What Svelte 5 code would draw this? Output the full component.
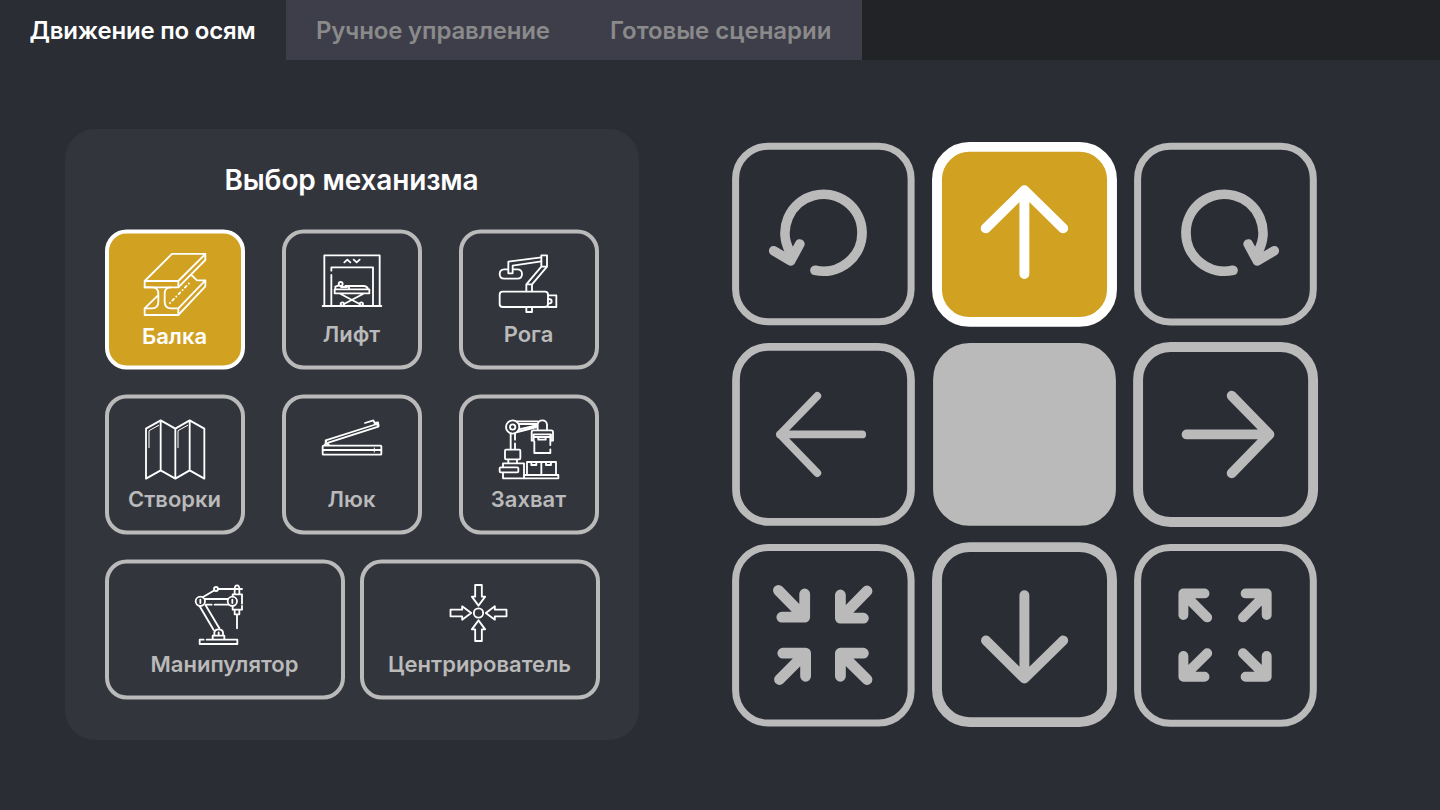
<script>
  const tabs = [
    { name: 'Движение по осям', width: 286, spacing: -0.2 },
    { name: 'Ручное управление', width: 294, spacing: -0.16 },
    { name: 'Готовые сценарии', width: 282, spacing: -0.02 }
  ];
  let tab = $state(0);
  let mechanism = $state('beam');
  let direction = $state('up');

  const mechanisms = [
    { id: 'beam', label: 'Балка' },
    { id: 'lift', label: 'Лифт' },
    { id: 'horns', label: 'Рога' },
    { id: 'doors', label: 'Створки' },
    { id: 'hatch', label: 'Люк' },
    { id: 'gripper', label: 'Захват' },
    { id: 'arm', label: 'Манипулятор', wide: true },
    { id: 'center', label: 'Центрирователь', wide: true }
  ];

  // Each key carries its frame (x, y, size, line width) and the strokes of its glyph.
  const keys = [
    { id: 'ccw', box: '723 134 201 200', f: [735.6, 146.2, 175.5, 7], w: 9.7,
      d: 'M815 270.3A38.5 38.5 0 1 0 789.9 251.5L790.7 260.8M773.8 250.8L790.7 260.8L799.8 244' },
    { id: 'up', box: '924 134 201 200', f: [937, 146.9, 175, 9.9], w: 9.9,
      d: 'M1024.4 274V190.3M985.7 228.4L1024.4 190.3L1063.2 228.4' },
    { id: 'cw', box: '1125 134 201 200', f: [1137.6, 146.2, 175.7, 7], w: 9.7,
      d: 'M1233 270.3A38.5 38.5 0 1 1 1258.1 251.5L1257.3 260.8M1274.2 250.8L1257.3 260.8L1248.2 244' },
    { id: 'left', box: '723 334 201 201', f: [736, 346.9, 175, 7.7], w: 7.8,
      d: 'M862.2 434.4H780M817.3 396L780 434.4L817.3 473' },
    { id: 'stop', box: '924 334 201 201', f: [937, 346.9, 175, 7.8], solid: true, w: 0, d: '' },
    { id: 'right', box: '1125 334 201 201', f: [1138.1, 347, 175, 9.9], w: 9.9,
      d: 'M1186.6 434.4H1269.4M1231.7 395.7L1269.4 434.4L1231.7 473.2' },
    { id: 'in', box: '723 535 201 200', f: [735.6, 547.5, 175.5, 7], w: 10.8,
      d: 'M804.7 594V617.2H781.8M778.4 590.4L804.7 617.2M840.4 595V618.2H863.4M867 591L840.4 618.2M782.8 653.2H805.6V676.3M779.5 679.5L805.6 653.2M863.4 653.2H840.4V676.3M867 679.5L840.4 653.2' },
    { id: 'down', box: '924 535 201 200', f: [937, 547.1, 175, 9.9], w: 9.9,
      d: 'M1024.4 595.3V678.5M986 640.5L1024.4 678.5L1063.2 640.5' },
    { id: 'out', box: '1125 535 201 200', f: [1137.6, 547.5, 175.7, 7], w: 9.9,
      d: 'M1204.5 593.4H1183.4V615M1207.2 617.4L1183.4 593.4M1245.6 593.4H1266.7V615M1243 617.4L1266.7 593.4M1183.4 655.9V676.8H1204.5M1207.2 653.2L1183.4 676.8M1266.7 655.9V676.8H1245.6M1243 653.2L1266.7 676.8' }
  ];
</script>

<nav class="tabs">
  {#each tabs as t, i}
    <button class="tab" class:current={tab === i} style="width:{t.width}px;letter-spacing:{t.spacing}px" onclick={() => (tab = i)}>{t.name}</button>
  {/each}
</nav>

<main>
  <section class="panel">
    <h1>Выбор механизма</h1>
    <div class="mechanisms">
      {#each mechanisms as m}
        <button class="mech" class:wide={m.wide} class:active={mechanism === m.id} onclick={() => (mechanism = m.id)}>
          <svg class="face" viewBox={m.wide ? '15 12 720 423' : '15 12 420 423'}>
            <rect class="frame" x="21" y="19.5" width={m.wide ? 708 : 408} height="408" rx="59" />
            <g class="icon">
              {#if m.id === 'beam'}
                <path d="M134 168L216 86.5H316V105L235 187H134ZM134 168H235V187M235 168L316 87" />
                <path d="M134 187H156Q175 187 175 206V230Q175 250 156 250H134V270H235V250H213Q194 250 194 230V206Q194 187 213 187" />
                <path d="M235 250L316 166V184L235 270M316 166H291L274 150M134 250L174 211" />
                <path stroke-dasharray="0.1 10 7 10" d="M210 234L271 171" />
              {:else if m.id === 'lift'}
                <path d="M137 243H313M142 242V91H308V242M163 137V127H288V242M163 150V242" />
                <path d="M202 112L211 104L220 112M230 104L239 112L248 104" />
                <path d="M173 193H277V205H173ZM191 207L248 237M258 207L201 237M175 190V185L184 182M192 186H210M216 191V183M205 183H262Q271 184 273 192" />
                <circle cx="191" cy="177" r="6" /><circle cx="196" cy="237" r="5" /><circle cx="253" cy="237" r="5" />
              {:else if m.id === 'horns'}
                <path d="M163 145V110L262 97M176 145V122L262 109M163 145H176" />
                <path d="M162 133H151Q137 134 137 147Q137 161 151 161H190Q204 161 204 147Q204 133 190 133H177" />
                <path d="M262 91H279V125H262ZM262 125L217 178V199M279 125L234 178V199M217 178H234" />
                <rect x="137" y="200" width="145" height="46" rx="9" />
                <path d="M282 211H307V246H282M217 247V261H234V247M283 222Q293 222 293 229Q293 236 283 236" />
              {:else if m.id === 'doors'}
                <path d="M138 116L182 91L226 116L269 91L313 116V266L269 241L226 266L182 241L138 266ZM182 91V241M226 116V266M269 91V241" />
                <path class="thin" d="M147 173V122L176 106M234 173V122L263 106" />
              {:else if m.id === 'hatch'}
                <rect x="137" y="167" width="176" height="27" rx="2" />
                <path d="M139 180H311M146 160V151L300 102L304 110L154 158M146 151L151 165M143 165L147 159L156 165M264 99L289 91L293 99L303 97L305 108" />
                <path class="thin" d="M292 174V186" />
              {:else if m.id === 'gripper'}
                <circle cx="176" cy="111" r="20" /><circle cx="176" cy="111" r="8" />
                <path d="M188 94H251M195 102H247M195 118L246 106M251 120V103Q253 91 265 91Q277 91 279 103V120M190 126L249 111" />
                <path d="M238 152H233V126Q233 121 238 121H292Q297 121 297 126V152H291V133H239V152M241 154V189H289V178M289 165V133M253 141V149H275V141M241 141H289" />
                <path d="M170 130V178M183 130V149M183 160V178" />
                <rect x="153" y="179" width="46" height="29" rx="3" />
                <path d="M163 209V219M189 209V219M147 232V220H210V265H147V249" />
                <rect x="137" y="232" width="56" height="15" rx="3" />
                <path d="M210 255H313V265H210M219 253V216H306V253M262 216V253M232 217V225H247V217M276 217V225H291V217" />
              {:else if m.id === 'arm'}
                <circle cx="301" cy="139" r="14" /><circle cx="397" cy="139" r="14" />
                <path d="M301 134V144M397 134V144M308 127L341 107M355 102H426" />
                <circle cx="348" cy="102" r="6" />
                <path d="M315 132H383M316 149H335M344 149H386M299 154L341 225M316 149L358 220M404 116V103Q404 91 411 91Q418 91 418 103V116M398 124V118H426V146M426 153V164H398V154M404 166V178H418V166M411 180V220" />
                <path d="M343 240V233Q344 223 356 223Q368 223 369 233V240M356 232V240M338 252V242H373V252M320 254H412V267H299V254H311" />
              {:else}
                <g transform="translate(370.5 174)">
                  <circle r="14" />
                  {#each [0, 90, 180, 270] as turn}
                    <path transform="rotate({turn})" d="M-10 -84H10V-49H20L0 -22L-20 -49H-10Z" />
                  {/each}
                </g>
              {/if}
            </g>
          </svg>
          <span>{m.label}</span>
        </button>
      {/each}
    </div>
  </section>

  <section class="keypad">
    {#each keys as k}
      <button class="key" class:active={direction === k.id} aria-label={k.id} onclick={() => (direction = k.id)}>
        <svg viewBox={k.box}>
          <rect class="frame" class:solid={k.solid} x={k.f[0]} y={k.f[1]} width={k.f[2]} height={k.f[2]} rx="32.5" stroke-width={k.f[3]} />
          <path class="glyph" d={k.d} stroke-width={k.w} />
        </svg>
      </button>
    {/each}
  </section>
</main>

<style>
  :global(body) {
    background: #2b2d35;
    font-family: Inter, sans-serif;
    font-weight: 600;
    overflow: hidden;
  }
  button {
    border: 0;
    padding: 0;
    background: none;
    font: inherit;
    color: inherit;
  }
  svg {
    display: block;
    width: 100%;
    height: 100%;
    fill: none;
  }
  .tabs {
    display: flex;
    height: 60px;
    background: #222327;
  }
  .tab {
    box-sizing: border-box;
    padding: 2px 0 0 30px;
    background: #3d3e4a;
    color: #8a8a8a;
    font-size: 24px;
    line-height: 58px;
    text-align: left;
    white-space: nowrap;
  }
  .tab.current {
    background: #2b2d35;
    color: #fff;
    padding-left: 29.5px;
  }
  main {
    display: flex;
    height: 750px;
  }
  .panel {
    box-sizing: border-box;
    width: 574px;
    height: 611px;
    margin: 69px 84px 0 65px;
    padding: 34px 39px 0 40px;
    border-radius: 30px;
    background: #33353d;
  }
  h1 {
    margin: 0 0 32px;
    padding-right: 2px;
    color: #fff;
    font-size: 28px;
    font-weight: 600;
    line-height: 34px;
    letter-spacing: -0.15px;
    text-align: center;
  }
  .mechanisms {
    display: flex;
    flex-wrap: wrap;
    justify-content: space-between;
    row-gap: 24px;
  }
  .mech {
    display: grid;
    width: 140px;
    height: 141px;
    color: #bababa;
    font-size: 22px;
    line-height: 28px;
  }
  .mech:not(.wide):nth-child(3n) {
    margin-right: 1px;
  }
  .mech.wide {
    width: 240px;
  }
  .face,
  .mech span {
    grid-area: 1 / 1;
  }
  .mech span {
    padding: 91px 1px 0 0;
    text-align: center;
  }
  .frame {
    stroke: #bababa;
  }
  .mech .frame {
    stroke-width: 12;
  }
  .icon {
    stroke: #fff;
    stroke-width: 5.5;
    stroke-linejoin: round;
    stroke-linecap: round;
  }
  .thin {
    stroke-width: 3;
  }
  .mech.active {
    color: #fff;
  }
  .mech.active span {
    padding-top: 93px;
  }
  .active .frame {
    stroke: #fff;
    fill: #d1a122;
  }
  .keypad {
    display: grid;
    grid-template-columns: repeat(3, 201px);
    grid-template-rows: 200px 201px 200px;
    align-content: start;
    padding-top: 74px;
  }
  .glyph {
    stroke: #bababa;
    stroke-linecap: round;
    stroke-linejoin: round;
  }
  .active .glyph {
    stroke: #fff;
  }
  .solid {
    fill: #bababa;
  }
</style>
